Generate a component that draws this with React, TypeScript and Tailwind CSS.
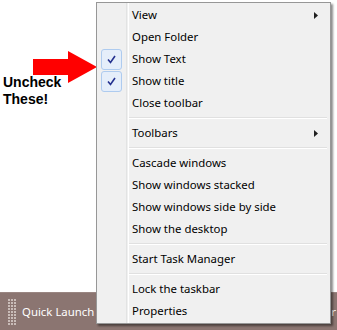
import * as React from 'react'

type Item =
  | { kind: 'item'; label: string; checked?: boolean; sub?: boolean }
  | { kind: 'sep' }

const ITEMS: Item[] = [
  { kind: 'item', label: 'View', sub: true },
  { kind: 'item', label: 'Open Folder' },
  { kind: 'item', label: 'Show Text', checked: true },
  { kind: 'item', label: 'Show title', checked: true },
  { kind: 'item', label: 'Close toolbar' },
  { kind: 'sep' },
  { kind: 'item', label: 'Toolbars', sub: true },
  { kind: 'sep' },
  { kind: 'item', label: 'Cascade windows' },
  { kind: 'item', label: 'Show windows stacked' },
  { kind: 'item', label: 'Show windows side by side' },
  { kind: 'item', label: 'Show the desktop' },
  { kind: 'sep' },
  { kind: 'item', label: 'Start Task Manager' },
  { kind: 'sep' },
  { kind: 'item', label: 'Lock the taskbar' },
  { kind: 'item', label: 'Properties' },
]

function CheckBox() {
  return (
    <div className="w-[21px] h-[21px] ml-[4px] rounded-[3px] border border-[#aecbef] bg-[#e5eefa] flex items-center justify-center">
      <svg width="9" height="9" viewBox="0 0 9 9">
        <path d="M1 4.5 L3.5 7.5 L8 1" fill="none" stroke="#24318f" strokeWidth="1.6" />
      </svg>
    </div>
  )
}

function ContextMenu() {
  return (
    <div className="absolute left-[96px] top-[2px] w-[235px] border border-[#979797] bg-[#f0f0f0] py-[1px] shadow-[2px_2px_2px_rgba(0,0,0,0.45)] font-['Noto_Sans',sans-serif] text-[11.4px] text-black">
      {/* gutter line */}
      <div className="absolute left-[29px] top-0 bottom-0 w-[2px] border-l border-[#e2e3e3] shadow-[1px_0_0_#ffffff]" />
      {ITEMS.map((it, i) =>
        it.kind === 'sep' ? (
          <div key={i} className="h-[8px] flex items-center pl-[31px] pr-[3px]">
            <div className="w-full h-[2px] border-t border-[#e0e0e0] border-b border-b-white" />
          </div>
        ) : (
          <div key={i} className="relative h-[22px] flex items-center">
            <div className="w-[35px] h-full flex items-center">{it.checked && <CheckBox />}</div>
            <span className="leading-none">{it.label}</span>
            {it.sub && (
              <svg className="absolute right-[12px] top-[8px]" width="4" height="7" viewBox="0 0 4 7">
                <path d="M0 0 L4 3.5 L0 7 Z" fill="#202020" />
              </svg>
            )}
          </div>
        )
      )}
    </div>
  )
}

function Grip() {
  return (
    <div className="grid grid-cols-3 gap-[1px] w-[8px]">
      {Array.from({ length: 27 }).map((_, i) => (
        <div key={i} className="w-[2px] h-[2px] bg-[#c9bcb8]" />
      ))}
    </div>
  )
}

export default function App() {
  return (
    <div className="relative w-[337px] h-[330px] bg-white overflow-hidden flex flex-col">
      <div className="flex-1" />

      {/* taskbar */}
      <div className="h-[38px] bg-[#8b7571] border-t border-[#9a8682] flex items-center pl-[8px] pr-[1px] font-['Noto_Sans',sans-serif] text-[11.4px] text-white">
        <Grip />
        <span className="ml-[6px]">Quick Launch</span>
        <span className="ml-auto">r</span>
      </div>

      {/* annotation */}
      <div className="absolute left-[33px] top-[51px]">
        <svg width="65" height="32" viewBox="0 0 65 32">
          <path d="M0 8 L35 8 L35 0 L64 16 L35 32 L35 24 L0 24 Z" fill="#ff0000" />
        </svg>
      </div>
      <div className="absolute left-[3px] top-[74px] font-['Liberation_Sans',Arial,sans-serif] font-bold text-[14px] leading-[17px] text-black">
        <div>Uncheck</div>
        <div>These!</div>
      </div>

      <ContextMenu />
    </div>
  )
}
